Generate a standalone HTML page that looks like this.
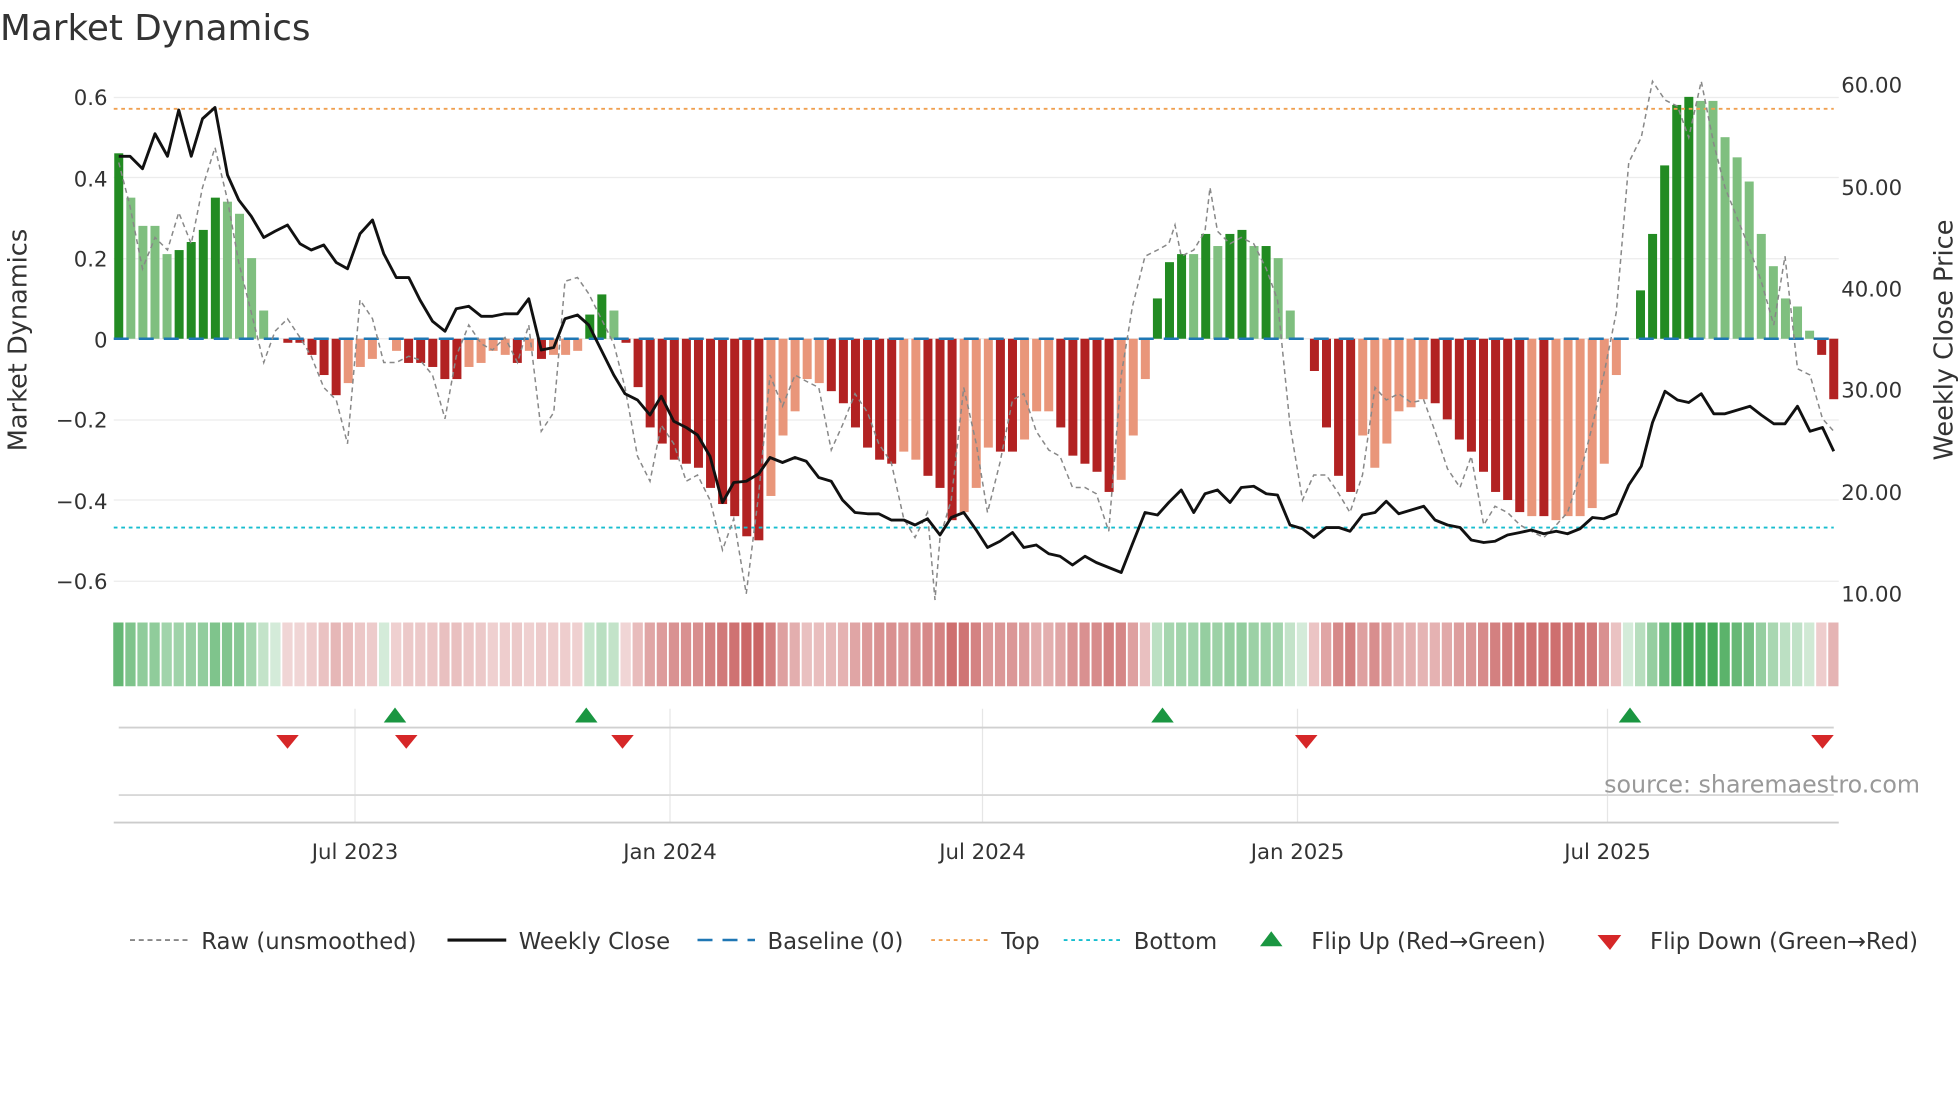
<!DOCTYPE html>
<html><head><meta charset="utf-8"><style>
html,body{margin:0;padding:0;background:#fff;width:1960px;height:1102px;overflow:hidden}
svg text{font-family:"DejaVu Sans","Liberation Sans",sans-serif;fill:#333}
</style></head><body>
<svg id="s" width="1960" height="1102" viewBox="0 0 1568 881.6" xmlns="http://www.w3.org/2000/svg">
<text x="0" y="32" font-size="28.6">Market Dynamics</text>
<g id="grid"></g>
<g id="bars"></g>
<g id="lines"></g>
<g font-size="17" text-anchor="end">
<text x="86" y="84">0.6</text><text x="86" y="149">0.4</text><text x="86" y="213">0.2</text>
<text x="86" y="278">0</text><text x="86" y="342">−0.2</text><text x="86" y="407">−0.4</text><text x="86" y="471">−0.6</text>
</g>
<g font-size="17">
<text x="1473" y="74">60.00</text><text x="1473" y="156">50.00</text><text x="1473" y="237">40.00</text>
<text x="1473" y="318">30.00</text><text x="1473" y="400">20.00</text><text x="1473" y="481">10.00</text>
</g>
<text font-size="20.5" transform="translate(21,272) rotate(-90)" text-anchor="middle">Market Dynamics</text>
<text font-size="20.5" transform="translate(1562,272) rotate(-90)" text-anchor="middle">Weekly Close Price</text>
<g font-size="17" text-anchor="middle">
<text x="284" y="687">Jul 2023</text><text x="536" y="687">Jan 2024</text><text x="786" y="687">Jul 2024</text>
<text x="1038" y="687">Jan 2025</text><text x="1286" y="687">Jul 2025</text>
</g>
<text x="1536" y="634" font-size="19" text-anchor="end" style="fill:#999">source: sharemaestro.com</text>
<g font-size="18.2">
<line x1="104" y1="752" x2="150" y2="752" stroke="#888" stroke-width="1.5" stroke-dasharray="4,3"/><text x="161" y="759">Raw (unsmoothed)</text>
<line x1="358" y1="752" x2="405" y2="752" stroke="#111" stroke-width="2.5"/><text x="415" y="759">Weekly Close</text>
<line x1="558" y1="752" x2="604" y2="752" stroke="#1f77b4" stroke-width="2" stroke-dasharray="12,8"/><text x="614" y="759">Baseline (0)</text>
<line x1="745" y1="752" x2="790" y2="752" stroke="#f0a050" stroke-width="1.5" stroke-dasharray="3,3"/><text x="801" y="759">Top</text>
<line x1="851" y1="752" x2="896" y2="752" stroke="#17becf" stroke-width="1.5" stroke-dasharray="3,3"/><text x="907" y="759">Bottom</text>
<polygon points="1008,757 1017,745 1026,757" fill="#1a9641"/><text x="1049" y="759">Flip Up (Red→Green)</text>
<polygon points="1278,748 1297,748 1288,760" fill="#d62728"/><text x="1320" y="759">Flip Down (Green→Red)</text>
</g>
</svg>
<script>
var NS="http://www.w3.org/2000/svg";
function el(p,t,a){var e=document.createElementNS(NS,t);for(var k in a)e.setAttribute(k,a[k]);document.getElementById(p).appendChild(e);return e;}
[78,142,207,271,336,400,465].forEach(function(y){el("grid","line",{x1:91,x2:1471,y1:y,y2:y,stroke:"#ececec","stroke-width":1});});
[284,536,786,1038,1286].forEach(function(x){el("grid","line",{x1:x,x2:x,y1:567,y2:658,stroke:"#e6e6e6","stroke-width":1});});
el("grid","line",{x1:95,x2:1467,y1:582,y2:582,stroke:"#d0d0d0","stroke-width":1.5});
el("grid","line",{x1:95,x2:1467,y1:636,y2:636,stroke:"#d8d8d8","stroke-width":1.5});
el("grid","line",{x1:91,x2:1471,y1:658,y2:658,stroke:"#ccc","stroke-width":1.5});
var B=[[.46,1],[.35,0],[.28,0],[.28,0],[.21,0],[.22,1],[.24,1],[.27,1],[.35,1],[.34,0],[.31,0],[.2,0],[.07,0],[0,0],[-.01,1],[-.01,1],[-.04,1],[-.09,1],[-.14,1],[-.11,0],[-.07,0],[-.05,0],[0,0],[-.03,0],[-.06,1],[-.06,1],[-.07,1],[-.1,1],[-.1,1],[-.07,0],[-.06,0],[-.03,0],[-.04,0],[-.06,1],[-.03,0],[-.05,1],[-.04,0],[-.04,0],[-.03,0],[.06,1],[.11,1],[.07,0],[-.01,1],[-.12,1],[-.22,1],[-.26,1],[-.3,1],[-.31,1],[-.32,1],[-.37,1],[-.41,1],[-.44,1],[-.49,1],[-.5,1],[-.39,0],[-.24,0],[-.18,0],[-.1,0],[-.11,0],[-.13,1],[-.16,1],[-.22,1],[-.27,1],[-.3,1],[-.31,1],[-.28,0],[-.3,0],[-.34,1],[-.37,1],[-.45,1],[-.43,0],[-.37,0],[-.27,0],[-.28,1],[-.28,1],[-.25,0],[-.18,0],[-.18,0],[-.22,1],[-.29,1],[-.31,1],[-.33,1],[-.38,1],[-.35,0],[-.24,0],[-.1,0],[.1,1],[.19,1],[.21,1],[.21,0],[.26,1],[.23,0],[.26,1],[.27,1],[.23,0],[.23,1],[.2,0],[.07,0],[0,0],[-.08,1],[-.22,1],[-.34,1],[-.38,1],[-.24,0],[-.32,0],[-.26,0],[-.18,0],[-.17,0],[-.15,0],[-.16,1],[-.2,1],[-.25,1],[-.28,1],[-.33,1],[-.38,1],[-.4,1],[-.43,1],[-.44,0],[-.44,1],[-.45,0],[-.44,0],[-.44,0],[-.42,0],[-.31,0],[-.09,0],[0,0],[.12,1],[.26,1],[.43,1],[.58,1],[.6,1],[.59,0],[.59,0],[.5,0],[.45,0],[.39,0],[.26,0],[.18,0],[.1,0],[.08,0],[.02,0],[-.04,1],[-.15,1]];
var n=B.length,x0=95,dx=(1467-95)/(n-1),k=322.5;
B.forEach(function(b,i){var v=b[0],x=x0+i*dx;
 var c=v>=0?(b[1]?"#228b22":"#7fbf7f"):(b[1]?"#b22222":"#e9967a");
 if(v!==0){var h=Math.abs(v)*k;el("bars","rect",{x:x-3.6,y:v>0?271-h:271,width:7.2,height:h,fill:c});}
 var a=0.22+0.75*Math.min(Math.abs(v)/0.6,1);
 var hc=v>=0?"rgba(60,165,80,"+a+")":"rgba(192,72,72,"+a+")";
 el("bars","rect",{x:x-4.4,y:498,width:8.2,height:51,fill:hc});
});
el("lines","line",{x1:91,x2:1467,y1:87,y2:87,stroke:"#f0a050","stroke-width":1.5,"stroke-dasharray":"3,3"});
el("lines","line",{x1:91,x2:1467,y1:422,y2:422,stroke:"#17becf","stroke-width":1.5,"stroke-dasharray":"3,3"});
el("lines","line",{x1:91,x2:1467,y1:271,y2:271,stroke:"#1f77b4","stroke-width":2,"stroke-dasharray":"12,8"});
var R="95 130,104 165,114 215,124 190,134 200,143 170,153 195,162 150,172 118,182 160,191 210,201 250,211 290,220 265,230 255,240 270,249 285,259 310,269 320,278 355,288 240,298 255,307 290,317 290,327 285,336 288,346 300,356 335,365 285,375 260,385 275,394 280,404 270,414 290,423 260,433 345,443 330,452 225,462 222,471 235,481 255,491 275,500 310,510 365,520 385,529 340,539 355,549 385,558 380,568 400,578 440,587 415,597 475,607 395,616 300,626 325,636 300,645 305,655 310,665 360,674 340,684 315,694 330,703 355,713 370,723 415,732 430,742 410,748 480,752 430,761 400,771 310,781 355,790 410,800 370,810 320,819 315,829 345,839 360,848 365,858 390,868 390,877 395,887 425,897 300,906 245,916 205,926 200,935 195,940 180,945 205,955 200,964 185,968 150,974 185,984 195,993 190,1003 195,1013 215,1022 240,1032 340,1042 400,1051 380,1061 380,1071 395,1080 410,1090 380,1100 310,1109 320,1119 315,1129 322,1139 320,1148 345,1158 375,1168 390,1177 365,1187 420,1196 405,1206 410,1216 420,1225 425,1235 430,1245 420,1254 410,1264 380,1274 340,1283 300,1293 250,1303 130,1313 110,1322 65,1332 80,1342 85,1351 110,1361 65,1371 115,1380 150,1390 175,1400 200,1409 225,1419 260,1428 205,1438 295,1448 300,1458 335,1467 345";
el("lines","polyline",{points:R,fill:"none",stroke:"#888","stroke-width":1.2,"stroke-dasharray":"4,3"});
var W="95 125,104 125,114 135,124 107,134 125,143 88,153 125,162 95,172 86,182 140,191 160,201 173,211 190,220 185,230 180,240 195,249 200,259 196,269 210,278 215,288 187,298 176,307 203,317 222,327 222,336 240,346 257,356 265,365 247,375 245,385 253,394 253,404 251,414 251,423 239,433 280,443 278,452 255,462 252,471 260,481 280,491 300,500 315,510 320,520 332,529 317,539 337,549 342,558 348,568 365,578 402,587 386,597 385,607 379,616 366,626 370,636 366,645 369,655 382,665 385,674 400,684 410,694 411,703 411,713 416,723 416,732 420,742 415,752 428,761 414,771 410,781 424,790 438,800 433,810 426,819 438,829 436,839 443,848 445,858 452,868 445,877 450,887 454,897 458,906 435,916 410,926 412,935 402,945 392,955 410,964 395,974 392,984 402,993 390,1003 389,1013 395,1022 396,1032 420,1042 423,1051 430,1061 422,1071 422,1080 425,1090 412,1100 410,1109 401,1119 411,1129 408,1139 405,1148 416,1158 420,1168 422,1177 432,1187 434,1196 433,1206 428,1216 426,1225 424,1235 427,1245 425,1254 427,1264 423,1274 414,1283 415,1293 411,1303 388,1313 373,1322 338,1332 313,1342 320,1351 322,1361 315,1371 331,1380 331,1390 328,1400 325,1409 332,1419 339,1428 339,1438 325,1448 345,1458 342,1467 361";
el("lines","polyline",{points:W,fill:"none",stroke:"#111","stroke-width":2.3,"stroke-linejoin":"round"});
[316,469,930,1304].forEach(function(x){el("lines","polygon",{points:(x-9)+",578 "+x+",566 "+(x+9)+",578",fill:"#1a9641"});});
[230,325,498,1045,1458].forEach(function(x){el("lines","polygon",{points:(x-9)+",588 "+(x+9)+",588 "+x+",599",fill:"#d62728"});});
</script>
</body></html>
